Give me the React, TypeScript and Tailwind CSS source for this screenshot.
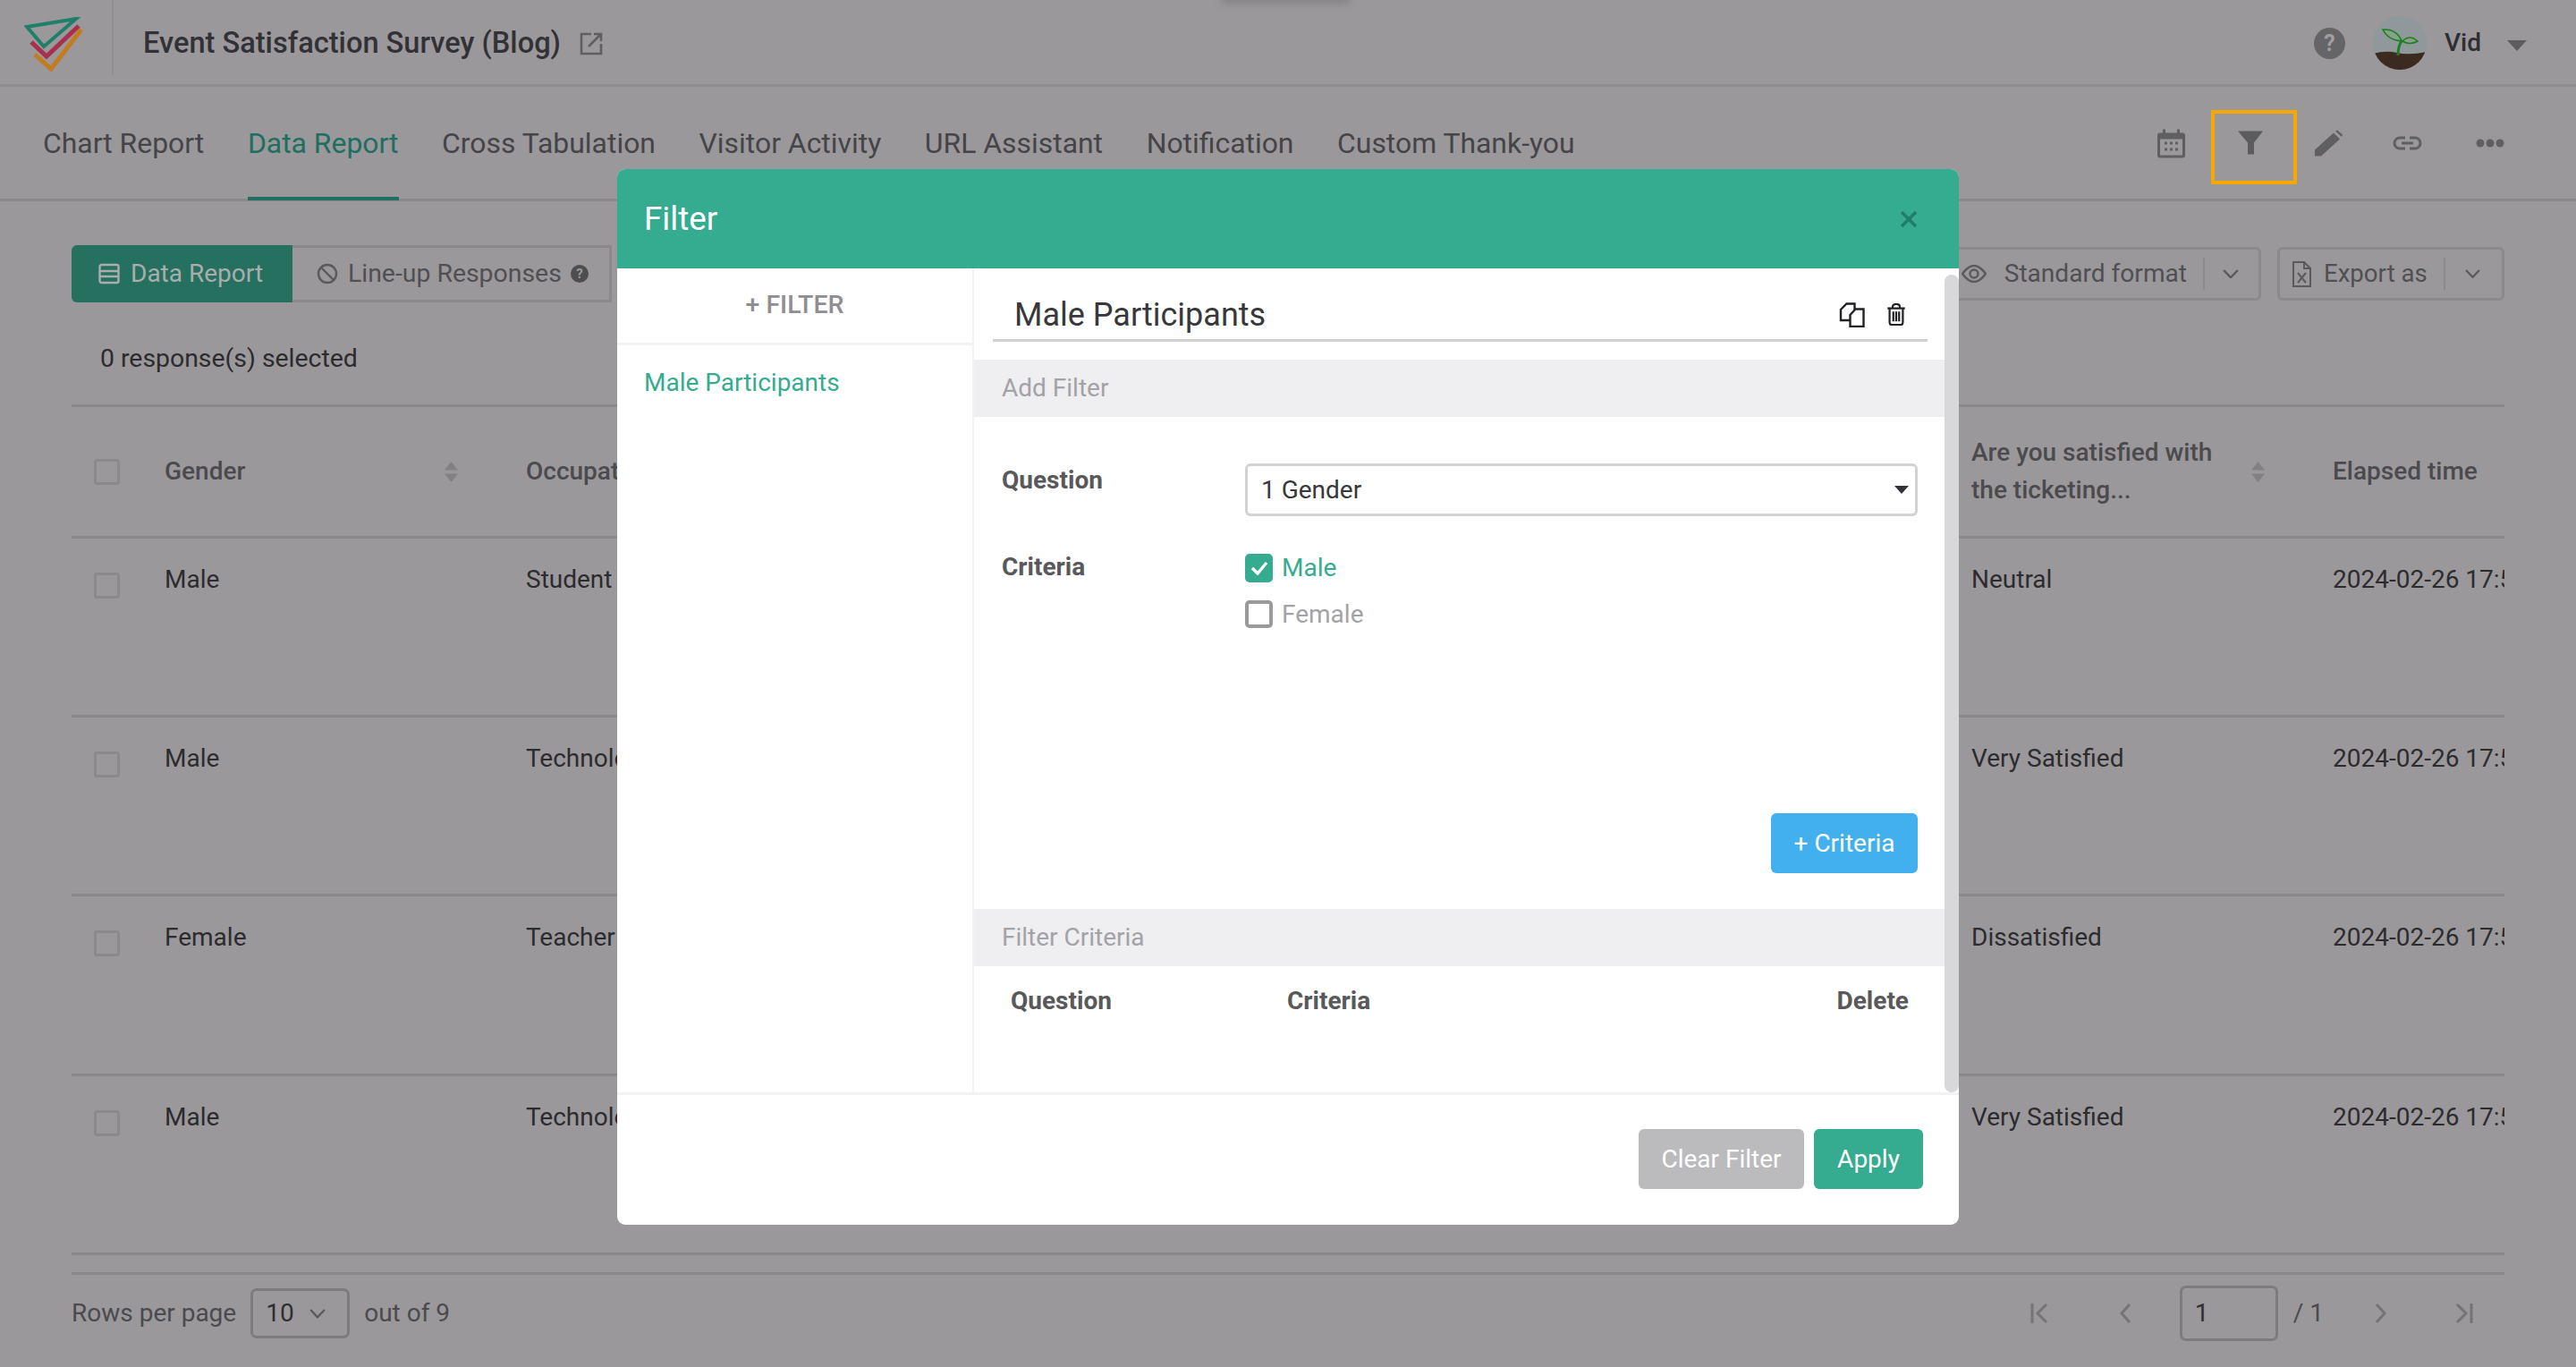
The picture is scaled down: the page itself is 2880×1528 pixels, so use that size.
import React from "react";

const Logo = () => (
  <svg width="70" height="70" viewBox="0 0 70 70" fill="none" className="shrink-0 mt-[14px]">
    <path d="M3 11 L58 2 L22 33 Z" stroke="#1f7f68" strokeWidth="4" strokeLinejoin="miter" />
    <path d="M8 28 L25 44 L61 10" stroke="#a8304c" strokeWidth="5" />
    <path d="M12 42 L30 58 L64 14" stroke="#c27c1e" strokeWidth="5" />
  </svg>
);

const Sort = () => (
  <svg width="17" height="23" viewBox="0 0 17 23" className="shrink-0" fill="#828083">
    <path d="M8.5 0 L16 9.5 H1 Z" />
    <path d="M8.5 23 L16 13.5 H1 Z" />
  </svg>
);

const Check = () => <div className="w-[29px] h-[29px] border-[3px] border-[#8b898c] rounded-[3px] shrink-0" />;

const rows = [
  ["Male", "Student", "Neutral"],
  ["Male", "Technology", "Very Satisfied"],
  ["Female", "Teacher", "Dissatisfied"],
  ["Male", "Technology", "Very Satisfied"],
];

const Chevron = ({ size = 18 }: { size?: number }) => (
  <svg width={size} height={size * 0.6} viewBox="0 0 18 11" fill="none" stroke="#5a595c" strokeWidth="2.4" className="shrink-0">
    <path d="M1 1 L9 9.5 L17 1" />
  </svg>
);

const Nav = ({ d, w = 20 }: { d: string; w?: number }) => (
  <svg width={w} height="24" viewBox={`0 0 ${w} 24`} fill="none" stroke="#757376" strokeWidth="3" className="shrink-0">
    <path d={d} />
  </svg>
);

export default function App() {
  return (
    <div className="relative w-[2880px] h-[1528px] overflow-hidden bg-[#9a989b] text-[#2c2b2e] [font-family:Roboto,sans-serif] text-[28px]">
      <div className="absolute left-[1365px] top-[-6px] w-[145px] h-[10px] bg-[#838185] blur-[4px] rounded-full" />

      {/* top header */}
      <header className="h-[97px] flex items-center border-b-[3px] border-[#8e8c8f] pl-[27px] pr-[55px]">
        <Logo />
        <div className="w-[2px] h-[84px] bg-[#908e91] ml-[28px] mr-[33px] self-start" />
        <div className="text-[32.6px] font-medium text-[#323135] pt-[2px]">Event Satisfaction Survey (Blog)</div>
        <svg width="26" height="26" viewBox="0 0 26 26" fill="none" stroke="#5f5e61" strokeWidth="2.6" className="ml-[21px] mt-[3px] shrink-0">
          <path d="M13 2 H2 V24 H24 V13" />
          <path d="M10 16 L24 2 M16 2 H24 V10" />
        </svg>
        <div className="ml-auto flex items-center pt-[2px]">
          <svg width="35" height="35" viewBox="0 0 35 35" className="shrink-0">
            <circle cx="17.5" cy="17.5" r="17.5" fill="#656467" />
            <text x="17.5" y="26" textAnchor="middle" fontSize="25" fontWeight="700" fill="#a09ea1" fontFamily="Roboto">?</text>
          </svg>
          <svg width="60" height="60" viewBox="0 0 60 60" className="ml-[31px] shrink-0">
            <defs>
              <clipPath id="av"><circle cx="30" cy="30" r="30" /></clipPath>
            </defs>
            <g clipPath="url(#av)">
              <rect width="60" height="60" fill="#8f989a" />
              <path d="M0 42 Q14 38 27 41 T60 40 V60 H0 Z" fill="#3c2a21" />
              <path d="M28 44 Q28 32 33 27" stroke="#1d7f1d" strokeWidth="3" fill="none" />
              <path d="M32 28 Q17 27 11 15 Q27 14 32 28 Z" stroke="#1d7f1d" strokeWidth="1.5" fill="#87a089" />
              <path d="M33 28 Q41 20 50 28 Q41 33 33 28 Z" stroke="#1d7f1d" strokeWidth="1.5" fill="#87a089" />
            </g>
          </svg>
          <div className="ml-[20px] text-[28px] font-medium text-[#2f2e31]">Vid</div>
          <svg width="22" height="12" viewBox="0 0 22 12" className="ml-[29px] mt-[6px] shrink-0" fill="#5c5b5e">
            <path d="M0 0 H22 L11 12 Z" />
          </svg>
        </div>
      </header>

      {/* tabs */}
      <nav className="h-[128px] flex border-b-[3px] border-[#8a888b] pl-[48px] pr-[80px] text-[31.9px] text-[#454447]">
        <div className="flex gap-[48.6px] items-start">
          <div className="pt-[40px] h-[126px]">Chart Report</div>
          <div className="pt-[40px] h-[127px] text-[#1e6f60] border-b-[4px] border-[#21705f]">Data Report</div>
          <div className="pt-[40px]">Cross Tabulation</div>
          <div className="pt-[40px]">Visitor Activity</div>
          <div className="pt-[40px]">URL Assistant</div>
          <div className="pt-[40px]">Notification</div>
          <div className="pt-[40px]">Custom Thank-you</div>
        </div>
        <div className="ml-auto flex items-start">
          <svg width="31" height="33" viewBox="0 0 31 32" className="mt-[47px] shrink-0" fill="#5f5e61">
            <path d="M6 0 h3 v4 h13 V0 h3 v4 h3 a3 3 0 0 1 3 3 v22 a3 3 0 0 1 -3 3 H3 a3 3 0 0 1 -3 -3 V7 a3 3 0 0 1 3 -3 h3 Z M3 11 v18 h25 V11 Z" fillRule="evenodd" />
            <path d="M8 14h3v3H8zM14 14h3v3h-3zM20 14h3v3h-3zM8 21h3v3H8zM14 21h3v3h-3zM20 21h3v3h-3z" />
          </svg>
          <div className="w-[96px] h-[83px] mt-[26px] ml-[29px] border-[4px] border-[#f5a800] flex justify-start pl-[26px] pt-[19px]">
            <svg width="28" height="27" viewBox="0 0 28 26" fill="#5c5b5e" className="shrink-0">
              <path d="M0 0 H28 L18 13 V26 H11 V13 Z" />
            </svg>
          </div>
          <svg width="31" height="30" viewBox="0 0 31 29" className="mt-[48px] ml-[20px] shrink-0" fill="#5f5e61">
            <path d="M0 29 V22 L21 3 L28 10 L7 29 Z" />
            <path d="M23 1 L25 0 L31 5 L30 7.5 Z" />
          </svg>
          <svg width="33" height="16" viewBox="0 0 33 16" fill="none" stroke="#5f5e61" strokeWidth="3" className="mt-[55px] ml-[56px] shrink-0">
            <path d="M14 2 H8 a6 6 0 0 0 0 12 H14 M19 2 H25 a6 6 0 0 1 0 12 H19 M10 8 H23" />
          </svg>
          <svg width="32" height="10" viewBox="0 0 32 10" fill="#5f5e61" className="mt-[58px] ml-[60px] shrink-0">
            <circle cx="5" cy="5" r="4.5" /><circle cx="16" cy="5" r="4.5" /><circle cx="27" cy="5" r="4.5" />
          </svg>
        </div>
      </nav>

      {/* body */}
      <main className="px-[80px]">
        <div className="flex items-start justify-between pt-[49px]">
          <div className="flex h-[64px] text-[#504f52]">
            <div className="w-[247px] flex items-center pl-[30px] rounded-l-[6px] bg-[#25705f] text-[#a9aeac]">
              <svg width="24" height="24" viewBox="0 0 24 24" fill="none" stroke="#a9aeac" strokeWidth="2.4" className="mr-[12px] shrink-0">
                <rect x="1.5" y="2" width="21" height="20" rx="2" /><path d="M1.5 9 H22.5 M1.5 15 H22.5" />
              </svg>
              Data Report
            </div>
            <div className="w-[357px] flex items-center pl-[27px] border-y-[3px] border-r-[3px] border-[#8b898c] text-[28.4px]">
              <svg width="24" height="24" viewBox="0 0 24 24" fill="none" stroke="#5a595c" strokeWidth="2.4" className="mr-[11px] shrink-0">
                <circle cx="12" cy="12" r="10" /><path d="M5 5 L19 19" />
              </svg>
              Line-up Responses
              <svg width="20" height="20" viewBox="0 0 20 20" className="ml-[10px] shrink-0">
                <circle cx="10" cy="10" r="10" fill="#4e4d50" />
                <text x="10" y="15" textAnchor="middle" fontSize="15" fontWeight="700" fill="#9a989b" fontFamily="Roboto">?</text>
              </svg>
            </div>
          </div>
          <div className="flex gap-[18px] mt-[2px] text-[#504f52]">
            <div className="h-[60px] flex items-center pl-[40px] pr-[22px] border-[3px] border-[#8b898c] rounded-[6px] text-[28.1px]">
              <svg width="28" height="20" viewBox="0 0 28 20" fill="none" stroke="#5a595c" strokeWidth="2.4" className="mr-[20px] shrink-0">
                <path d="M1 10 Q14 -8 27 10 Q14 28 1 10 Z" /><circle cx="14" cy="10" r="4.5" />
              </svg>
              Standard format
              <div className="w-[2px] h-[36px] bg-[#8b898c] ml-[18px] mr-[20px]" />
              <Chevron />
            </div>
            <div className="h-[60px] w-[254px] flex items-center pl-[14px] border-[3px] border-[#8b898c] rounded-[6px] text-[27.6px]">
              <svg width="21" height="29" viewBox="0 0 21 29" fill="none" stroke="#5a595c" strokeWidth="2" className="mr-[14px] shrink-0">
                <path d="M1 1 H13 L20 8 V28 H1 Z M13 1 V8 H20" />
                <path d="M6 13 L15 24 M15 13 L6 24" />
              </svg>
              Export as
              <div className="w-[2px] h-[36px] bg-[#8b898c] ml-[18px] mr-[22px]" />
              <Chevron size={17} />
            </div>
          </div>
        </div>

        <div className="pl-[32px] pt-[42px] h-[114px] text-[28.4px]">0 response(s) selected</div>

        <div className="overflow-hidden">
          <div className="h-[150px] flex items-center border-y-[3px] border-[#8a888b] text-[#4b4a4d] font-medium">
            <div className="w-[104px] pl-[25px] shrink-0"><Check /></div>
            <div className="w-[404px] pr-[75px] flex justify-between items-center shrink-0">Gender<Sort /></div>
            <div className="w-[1616px] shrink-0">Occupation</div>
            <div className="w-[404px] flex justify-between items-center pr-[75px] shrink-0 leading-[42px]">
              <div className="w-[290px]">Are you satisfied with the ticketing...</div><Sort />
            </div>
            <div className="whitespace-nowrap">Elapsed time</div>
          </div>
          {rows.map((r, i) => (
            <div key={i} className="h-[200.2px] flex items-start border-b-[3px] border-[#8a888b] pt-[25px]">
              <div className="w-[104px] pl-[25px] pt-[13px] shrink-0"><Check /></div>
              <div className="w-[404px] shrink-0">{r[0]}</div>
              <div className="w-[1616px] shrink-0">{r[1]}</div>
              <div className="w-[404px] shrink-0">{r[2]}</div>
              <div className="whitespace-nowrap">2024-02-26 17:52:11</div>
            </div>
          ))}
        </div>

        <div className="mt-[19px] border-t-[3px] border-[#8a888b] flex items-center h-[90px] text-[#4b4a4d]">
          <div>Rows per page</div>
          <div className="ml-[16px] w-[111px] h-[56px] border-[3px] border-[#7d7b7e] rounded-[7px] flex items-center pl-[14px] text-[#2f2e31]">
            10
            <div className="ml-[17px]"><Chevron /></div>
          </div>
          <div className="ml-[16px]">out of 9</div>
          <div className="ml-auto flex items-center">
            <Nav w={20} d="M2 1 V23 M18 2 L8 12 L18 22" />
            <div className="ml-[79px]"><Nav w={14} d="M12 2 L3 12 L12 22" /></div>
            <div className="ml-[54px] w-[110px] h-[62px] border-[3px] border-[#7d7b7e] rounded-[7px] flex items-center pl-[14px] text-[#2f2e31]">1</div>
            <div className="ml-[17px]">/ 1</div>
            <div className="ml-[57px]"><Nav w={14} d="M2 2 L11 12 L2 22" /></div>
            <div className="ml-[76px]"><Nav w={20} d="M2 2 L12 12 L2 22 M18 1 V23" /></div>
            <div className="w-[35px]" />
          </div>
        </div>
      </main>

      {/* modal */}
      <div className="absolute left-[690px] top-[189px] w-[1500px] h-[1180px] bg-white rounded-[9px] overflow-hidden flex flex-col">
        <div className="h-[111px] shrink-0 bg-[#35ab90] flex items-center px-[30px] text-white text-[36.8px]">
          Filter
          <svg width="20" height="20" viewBox="0 0 20 20" stroke="#1f7d69" strokeWidth="3.4" className="ml-auto mr-[16px] shrink-0">
            <path d="M2 2 L18 18 M18 2 L2 18" />
          </svg>
        </div>
        <div className="h-[921px] shrink-0 flex">
          <div className="w-[399px] shrink-0 border-r-[2px] border-[#f2f1f3]">
            <div className="h-[86px] border-b-[3px] border-[#f2f1f3] flex items-center justify-center text-[#8f8e92] font-medium text-[28.5px]">+ FILTER</div>
            <div className="pl-[30px] pt-[21px] text-[#35ab90]">Male Participants</div>
          </div>
          <div className="flex-1 min-w-0 flex flex-col">
            <div className="ml-[21px] mr-[19px] h-[82px] shrink-0 border-b-[3px] border-[#d0cfd2] flex items-center pl-[24px] pt-[24px] text-[36px] text-[#38373b] mb-[20px]">
              Male Participants
              <svg width="29" height="28" viewBox="0 0 28 28" fill="#fff" stroke="#222125" strokeWidth="2.4" className="ml-auto shrink-0">
                <path d="M1.5 8 L8 1.5 H17 V20 H1.5 Z" />
                <path d="M12 14 L18 7.5 H27 V27 H12 Z" />
              </svg>
              <svg width="22" height="25" viewBox="0 0 23 27" fill="none" stroke="#222125" strokeWidth="2.4" className="ml-[24px] mr-[24px] shrink-0">
                <path d="M1 6 H22 M7 5 Q7 1 11.5 1 Q16 1 16 5 M3.5 6 V23 Q3.5 26 6 26 H17 Q19.5 26 19.5 23 V6 M8 10 V22 M11.5 10 V22 M15 10 V22" />
              </svg>
            </div>
            <div className="h-[64px] shrink-0 bg-[#efeef1] flex items-center pl-[31px] text-[#a3a2a6]">Add Filter</div>
            <div className="h-[550px] shrink-0 relative pl-[31px] pt-[52px]">
              <div className="flex items-start">
                <div className="w-[272px] font-bold text-[#59585b] -mt-[2px]">Question</div>
                <div className="w-[752px] h-[59px] border-[3px] border-[#d2d1d4] rounded-[6px] flex items-center pl-[15px] text-[#38373b]">
                  1 Gender
                  <svg width="16" height="9" viewBox="0 0 16 9" fill="#333236" className="ml-auto mr-[7px] shrink-0"><path d="M0 0 H16 L8 9 Z" /></svg>
                </div>
              </div>
              <div className="flex items-start mt-[42px]">
                <div className="w-[272px] font-bold text-[#59585b] -mt-[6px]">Criteria</div>
                <div className="flex flex-col gap-[20px]">
                  <div className="flex items-center gap-[10px] h-[32px] text-[#35ab90]">
                    <div className="w-[31px] h-[32px] rounded-[5px] bg-[#35ab90] flex items-center justify-center">
                      <svg width="20" height="16" viewBox="0 0 20 16" fill="none" stroke="#fff" strokeWidth="3.4"><path d="M2 8 L8 14 L18 2" /></svg>
                    </div>
                    Male
                  </div>
                  <div className="flex items-center gap-[10px] h-[31px] text-[#a3a2a6]">
                    <div className="w-[31px] h-[31px] rounded-[5px] border-[4px] border-[#9a999c]" />
                    Female
                  </div>
                </div>
              </div>
              <div className="absolute right-[30px] top-[443px] w-[164px] h-[67px] rounded-[6px] bg-[#42b0ef] text-white flex items-center justify-center">+ Criteria</div>
            </div>
            <div className="h-[64px] shrink-0 bg-[#efeef1] flex items-center pl-[31px] text-[#a3a2a6]">Filter Criteria</div>
            <div className="flex pt-[18px] pl-[41px] pr-[40px] font-bold text-[#59585b]">
              <div className="w-[309px]">Question</div>
              <div>Criteria</div>
              <div className="ml-auto">Delete</div>
            </div>
          </div>
          <div className="w-[16px] shrink-0 mt-[7px] bg-[#d8d7da] rounded-full" />
        </div>
        <div className="flex-1 border-t-[3px] border-[#f2f1f3] flex justify-end items-start gap-[11px] pt-[38px] pr-[40px] text-white">
          <div className="w-[185px] h-[67px] rounded-[6px] bg-[#bbbabd] flex items-center justify-center">Clear Filter</div>
          <div className="w-[122px] h-[67px] rounded-[6px] bg-[#35ab90] flex items-center justify-center">Apply</div>
        </div>
      </div>
    </div>
  );
}
